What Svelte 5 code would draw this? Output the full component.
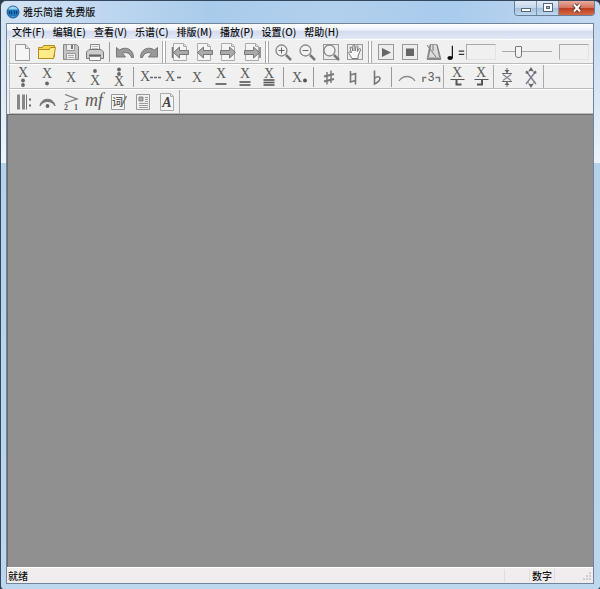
<script>
  const menus = ["文件(F)", "编辑(E)", "查看(V)", "乐谱(C)", "排版(M)", "播放(P)", "设置(O)", "帮助(H)"];

  let volume = $state(30);

  const dot = (y) => `<circle cx="12" cy="${y}" r="1.9" fill="#666" stroke="none"/>`;
  const x = (y, left = 12) =>
    `<text x="${left}" y="${y}" font-size="14" text-anchor="middle">X</text>`;
  const bars = (...rows) =>
    rows.map((y) => `<path d="M6.500 ${y}h11" stroke="#555" stroke-width="1.600"/>`).join("");
  const page = `<path d="M5.500 3.500h10l3 3v14h-13z" fill="#f4f4f4" stroke="#aaa"/><path d="M15.500 3.500v3h3" stroke="#aaa"/>`;
  const frame = `<rect x="4.500" y="4.500" width="15" height="15" fill="#ececec" stroke="#999"/>`;
  const lens = `<circle cx="10.500" cy="10.500" r="5.500" fill="#f2f2f2" stroke="#888" stroke-width="1.300"/><path d="M15 15l5 5" stroke="#777" stroke-width="2.500"/>`;
  const leftArrow = `<path d="M5.500 12.500l6-5.500v3.500h9v4h-9v3.500z" fill="#aaa" stroke="#777"/>`;
  const rightArrow = `<path d="M19.500 12.500l-6-5.500v3.500h-9v4h9v3.500z" fill="#aaa" stroke="#777"/>`;

  const icons = {
    new: `<path d="M4.500 4.500h10l4 4v12h-14z" fill="#f6f6f6" stroke="#999"/><path d="M14.500 4.500v4h4" fill="#ddd" stroke="#999"/>`,
    open: `<path d="M3.500 18.500v-11h4l1-2h11v11l-2 2z" fill="#f6d44c" stroke="#b48b1c"/><path d="M3.500 18.500v-9h11l1-2h5l-2 11z" fill="#ffeb87" stroke="#b48b1c"/>`,
    save: `<path d="M4.500 4.500h13l2 2v13h-15z" fill="#c4c4c4" stroke="#858585"/><path d="M7.500 4.500h8v6h-8z" fill="#eee" stroke="#999"/><path d="M13 5v4" stroke="#777" stroke-width="2"/><path d="M7.500 13.500h9v6h-9z" fill="#eee" stroke="#999"/><path d="M9 15.500h6M9 17.500h6" stroke="#aaa"/>`,
    print: `<path d="M7.500 10.500v-6h9v6" fill="#f5f5f5" stroke="#888"/><path d="M9 6.500h6M9 8.500h6" stroke="#bbb"/><path d="M6 9.500h12l2.500 2.500v6.500h-17v-6.500z" fill="#ccc" stroke="#777"/><path d="M6 15.500h12" stroke="#666" stroke-width="2"/><path d="M6.500 16.500h11v4h-11z" fill="#f5f5f5" stroke="#888"/>`,
    undo: `<path d="M3.500 7.500v9.500h9l-3-3.500c3.500-2 7.500-.5 9 4h2c0-8.500-8-11.500-14-7.500z" fill="#999" stroke="#777"/>`,
    redo: `<path d="M20.500 7.500v9.500h-9l3-3.500c-3.500-2-7.500-.5-9 4h-2c0-8.500 8-11.500 14-7.500z" fill="#999" stroke="#777"/>`,
    first: page + leftArrow + `<path d="M4.500 7v11" stroke="#777" stroke-width="1.500"/>`,
    prev: page + leftArrow,
    next: page + rightArrow,
    last: page + rightArrow + `<path d="M20 7v11" stroke="#777" stroke-width="1.500"/>`,
    zoomIn: lens + `<path d="M7.500 10.500h6M10.500 7.500v6" stroke="#666"/>`,
    zoomOut: lens + `<path d="M7.500 10.500h6" stroke="#666"/>`,
    zoomPage: frame + lens,
    hand: frame + `<path d="M9 18.500l-3-5c-1-2 1-2.500 2.500-.5l-1.500-5c0-1.500 1.500-1.500 2 0l1 3-.2-5c.2-1.500 1.700-1.500 2 0l.3 5 1-4.500c.6-1.300 2-.8 1.800.5l-.6 4.500 1.600-2.500c1-1 2-.2 1.600 1l-2.500 6v2.500z" fill="#fafafa" stroke="#777"/>`,
    play: frame + `<path d="M8 8l9 4.500-9 4.500z" fill="#666"/>`,
    stop: frame + `<path d="M8 8.500h8v7.500h-8z" fill="#666"/>`,
    metronome: `<path d="M8 4.500h7l4 14.500h-14z" fill="#ddd" stroke="#999"/><path d="M5 17.500h14v2.500h-14z" fill="#888"/><path d="M5 5l9 12M8.500 5l-2 12M15 5l2.500 12M11 5v6" stroke="#777"/>`,
    low2: x(12) + dot(15.5) + dot(20),
    low1: x(13) + dot(18.5),
    mid: x(17),
    high1: dot(6) + x(20),
    high2: dot(4.5) + dot(9) + x(21),
    whole: x(16, 8) + `<path d="M13 12.500h3M17 12.500h3M21 12.500h3" stroke="#666" stroke-width="1.600"/>`,
    half: x(16, 9) + `<path d="M16 12.500h4" stroke="#666" stroke-width="1.600"/>`,
    eighth: x(13) + bars(19),
    sixteenth: x(13) + bars(17, 20),
    thirty: x(13) + bars(15, 17.5, 20),
    dotted: x(17, 10) + `<circle cx="18" cy="15.500" r="2" fill="#555"/>`,
    sharp: `<path d="M10 7v12.500M14 5.500v12.500" stroke="#777" stroke-width="1.400"/><path d="M7 11.500l10-2.500M7 16.500l10-2.500" stroke="#777" stroke-width="2"/>`,
    natural: `<path d="M9.500 6v11l5-1.500M14.500 19.500v-11l-5 1.500" stroke="#777" stroke-width="1.600"/>`,
    flat: `<path d="M9.500 5.500v13.500c3-1.500 5.500-3.500 5.500-5.500s-3-2.500-5.500 0" stroke="#777" stroke-width="1.600"/>`,
    slur: `<path d="M4 16c4-6 12-6 16 0" stroke="#888" stroke-width="1.300"/>`,
    triplet: `<path d="M4 17v-4.500h3.500M16.500 12.500h4v4.500" stroke="#777" stroke-width="1.500"/><text x="12" y="16" font-size="12" text-anchor="middle" font-family="Liberation Sans">3</text>`,
    lineDown: x(12) + `<path d="M5.500 14.500h14" stroke="#555"/><path d="M11.500 15v4.500h5" stroke="#555" stroke-width="2"/>`,
    lineUp: x(12) + `<path d="M5.500 14.500h14" stroke="#555"/><path d="M13 15v4.500h-5" stroke="#555" stroke-width="2"/>`,
    narrow: `<path d="M7 8.500h10M7 16.500h10" stroke="#667"/><path d="M8 9.500l8 6M16 9.500l-8 6" stroke="#889" stroke-width="1.300"/><path d="M12 3v5M12 17v5" stroke="#666"/><path d="M9.500 5h5l-2.500 3zM9.500 20h5l-2.500-3z" fill="#666"/>`,
    cross: `<path d="M7 6l10 13M17 6l-10 13" stroke="#778" stroke-width="1.300"/><path d="M8 9l4-5 4 5M8 16l4 5 4-5" stroke="#889"/><path d="M12 2l2.500 4h-5zM12 23l2.500-4h-5zM6 8l3-2v3zM18 8l-3-2v3z" fill="#666"/>`,
    repeat: `<path d="M7.500 4.500v15M12.500 4.500v15" stroke="#888" stroke-width="3"/><path d="M15.500 4.500v15" stroke="#777"/><path d="M18 9.500h2M18 15.500h2" stroke="#666" stroke-width="2"/>`,
    fermata: `<path d="M5 16c1-9 14-9 15 0-3-6-12-6-15 0z" fill="#777" stroke="#777"/><circle cx="12.500" cy="16" r="1.900" fill="#666"/>`,
    hairpin: `<path d="M6 4.500l12 4.500-12 4" stroke="#777" stroke-width="1.300"/><text x="5" y="20" font-size="8" font-weight="bold">2</text><text x="15" y="20" font-size="8" font-weight="bold">1</text>`,
    mf: `<text x="11" y="16" font-size="18" font-style="italic" text-anchor="middle">mf</text>`,
    lyric: `<path d="M4.500 4.500h13v15h-13z" fill="#f5f5f5" stroke="#999"/><text x="5" y="16" font-size="11" font-family="Noto Sans CJK SC">词</text><path d="M19.500 6l-5 10" stroke="#777" stroke-width="1.500"/>`,
    layout: `<path d="M5.500 4.500h13v15h-13z" fill="#f0f0f0" stroke="#999"/><path d="M8 7h4v4h-4z" fill="#aaa" stroke="#888"/><path d="M14 7.500h3M14 9.500h3M14 11.500h3M8 13.500h9M8 15.500h9M8 17.500h9" stroke="#999"/>`,
    text: page + `<text x="12" y="17" font-size="14" font-weight="bold" font-style="italic" text-anchor="middle" style="fill:#444">A</text>`,
  };

  // "|" is a divider, "#" a gripper between bars, "]" the edge of a docked bar
  const mainBar = "new open save print | undo redo # first prev next last # zoomIn zoomOut zoomPage hand # play stop metronome".split(" ");
  const noteBar = "low2 low1 mid high1 high2 | whole half mid eighth sixteenth thirty | dotted | sharp natural flat | slur triplet ] lineDown lineUp ] narrow cross ]".split(" ");
  const markBar = "repeat fermata hairpin mf lyric layout text ]".split(" ");
</script>

{#snippet bar(items)}
  {#each items as item}
    {#if item === "|"}
      <span class="divider"></span>
    {:else if item === "#"}
      <span class="gripper"></span>
    {:else if item === "]"}
      <span class="edge"></span>
    {:else}
      <button class="tool" aria-label={item}>
        <svg viewBox="0 0 24 24" fill="none">{@html icons[item]}</svg>
      </button>
    {/if}
  {/each}
{/snippet}

<div class="window">
  <header>
    <svg class="logo" viewBox="0 0 14 14">
      <circle cx="7" cy="7" r="6" fill="#1b78bd" stroke="#2a5f94" />
      <path d="M2 4.500c2-4 8-4 10 0z" fill="#9bd3f2" />
      <path d="M3.500 6v3M5.500 6v3M8.500 6v3M10.500 6v3" stroke="#083b70" />
      <path d="M4 11c2 1 4 1 6 0z" fill="#5fb4e6" />
    </svg>
    <h1>雅乐简谱 免费版</h1>
    <div class="controls">
      <button aria-label="最小化">
        <svg viewBox="0 0 14 12"><rect x="2.500" y="6.500" width="9" height="3" fill="#fff" stroke="#56687d" /></svg>
      </button>
      <button aria-label="最大化">
        <svg viewBox="0 0 14 12">
          <rect x="2.500" y="1.500" width="9" height="8" fill="#fff" stroke="#56687d" />
          <rect x="5.500" y="4.500" width="3" height="2" fill="#9cb4cf" stroke="#56687d" />
        </svg>
      </button>
      <button class="close" aria-label="关闭">
        <svg viewBox="0 0 14 12">
          <path d="M4 2.500l6 7M10 2.500l-6 7" stroke="#5e3535" stroke-width="4" />
          <path d="M4 2.500l6 7M10 2.500l-6 7" stroke="#fff" stroke-width="2" />
        </svg>
      </button>
    </div>
  </header>

  <main>
    <nav>
      {#each menus as menu}
        <button>{menu}</button>
      {/each}
    </nav>

    <div class="toolbar">
      {@render bar(mainBar)}
      <label class="tempo" for="tempo">
        <svg viewBox="0 0 22 24">
          <ellipse cx="4.500" cy="18.500" rx="3" ry="2.200" fill="#111" />
          <path d="M7 5v13.500" stroke="#111" stroke-width="1.300" />
          <path d="M14 11h6M14 14.500h6" stroke="#333" stroke-width="1.400" />
        </svg>
      </label>
      <input id="tempo" class="field" type="text" aria-label="速度" />
      <input class="slider" type="range" min="0" max="100" bind:value={volume} aria-label="音量" />
      <input class="field" type="text" aria-label="位置" />
    </div>
    <div class="toolbar">{@render bar(noteBar)}</div>
    <div class="toolbar">{@render bar(markBar)}</div>

    <section class="workspace"></section>

    <footer>
      <span class="ready">就绪</span>
      <span class="pane"></span>
      <span class="pane">数字</span>
      <span class="pane"></span>
      <svg class="grip" viewBox="0 0 12 12">
        <path d="M9 3h2M6 6h2M9 6h2M3 9h2M6 9h2M9 9h2" stroke="#ccc" stroke-width="2" />
      </svg>
    </footer>
  </main>
</div>

<style>
  :global(body) {
    margin: 0;
    background: #2c3b4c;
  }
  button,
  input {
    font: inherit;
    color: inherit;
    margin: 0;
    padding: 0;
    border: none;
    background: none;
  }
  svg {
    display: block;
  }
  .window {
    box-sizing: border-box;
    min-height: 100vh;
    display: flex;
    flex-direction: column;
    padding: 0 6px 5px 5px;
    border: 1px solid #35475c;
    border-width: 1px 0 0 1px;
    border-radius: 6px 6px 4px 4px;
    background:
      linear-gradient(transparent 24px, #edf4fa 162px, #b4d2ea 162px, #bcd7ee),
      linear-gradient(90deg, #d3e3f4, #a9cbeb 35%, #b1d0ed 55%, #a9cbec 75%, #c3daf1);
    font-family: "Noto Sans CJK SC", sans-serif;
    font-size: 10px;
    font-weight: 500;
    color: #111;
  }
  header {
    display: flex;
    align-items: center;
    height: 22px;
  }
  .logo {
    width: 14px;
    height: 14px;
  }
  h1 {
    flex: 1;
    margin: 0 0 0 3px;
    font-size: 10px;
    font-weight: inherit;
    line-height: 16px;
  }
  .controls {
    display: flex;
    align-self: flex-start;
    height: 14px;
    margin-right: -1px;
    border: 1px solid #66809c;
    border-top: none;
    border-radius: 0 0 4px 4px;
    overflow: hidden;
  }
  .controls button {
    box-sizing: border-box;
    display: flex;
    align-items: center;
    justify-content: center;
    width: 22px;
    border-right: 1px solid #7d94ae;
    background: linear-gradient(#dfeaf6, #c4d6ea 50%, #a5bfdb 50%, #c0d7ee);
  }
  .controls svg {
    width: 14px;
    height: 12px;
  }
  .controls .close {
    width: 35px;
    border-right: none;
    background: linear-gradient(#e8ab9d, #d4725c 50%, #bb3a20 50%, #d46a45);
  }
  main {
    flex: 1;
    display: flex;
    flex-direction: column;
    border: 1px solid #71849a;
    background: #f0f0f0;
  }
  nav {
    display: flex;
    gap: 8px;
    padding: 0 5px;
    height: 15px;
    background: linear-gradient(#fff, #eef1fa 40%, #d5dcf0 50%, #e2e8f6);
  }
  nav button {
    line-height: 15px;
    white-space: nowrap;
  }
  .toolbar {
    display: flex;
    align-items: center;
    height: 23px;
    margin-left: 2px;
    padding-left: 1px;
    border-left: 1px solid #bbb;
    border-top: 1px solid #fff;
    border-bottom: 1px solid #bbb;
  }
  .tool,
  .tool svg {
    flex: none;
    width: 24px;
    height: 24px;
  }
  .tool :global(text) {
    fill: #5c5c5c;
  }
  .tool svg {
    font-family: "Liberation Serif", serif;
  }
  .divider {
    flex: none;
    width: 1px;
    height: 20px;
    margin: 0 3px 0 2px;
    background: #999;
  }
  .gripper {
    flex: none;
    width: 2px;
    height: 22px;
    margin: 0 2px 0 1px;
    border: 1px solid #aaa;
    border-width: 0 1px;
    background: #fff;
  }
  .edge {
    flex: none;
    width: 1px;
    height: 23px;
    margin-right: 1px;
    background: #aaa;
  }
  .tempo svg {
    width: 20px;
    height: 24px;
  }
  .field {
    box-sizing: border-box;
    flex: none;
    width: 30px;
    height: 16px;
    border: 1px solid #aaa;
    border-color: #aaa #e2e2e2 #e2e2e2 #aaa;
  }
  .slider {
    appearance: none;
    flex: none;
    width: 50px;
    height: 16px;
    margin: 0 7px 0 6px;
    background: linear-gradient(#aaa, #aaa) center / 100% 1px no-repeat;
  }
  .slider::-webkit-slider-thumb {
    appearance: none;
    box-sizing: border-box;
    width: 7px;
    height: 12px;
    border: 1px solid #777;
    border-radius: 1px 1px 3px 3px;
    background: #f4f4f4;
  }
  .workspace {
    flex: 1;
    border: 1px solid #696969;
    border-width: 1px 0 0 1px;
    background: #909090;
  }
  footer {
    display: flex;
    align-items: center;
    height: 15px;
    border-top: 1px solid #fff;
    background: #f1edee;
    line-height: 15px;
  }
  .ready {
    flex: 1;
    padding-left: 1px;
  }
  .pane {
    box-sizing: border-box;
    width: 25px;
    height: 13px;
    line-height: 13px;
    text-align: center;
    border-left: 1px solid #ddd;
  }
  .grip {
    width: 14px;
    height: 12px;
  }
</style>
